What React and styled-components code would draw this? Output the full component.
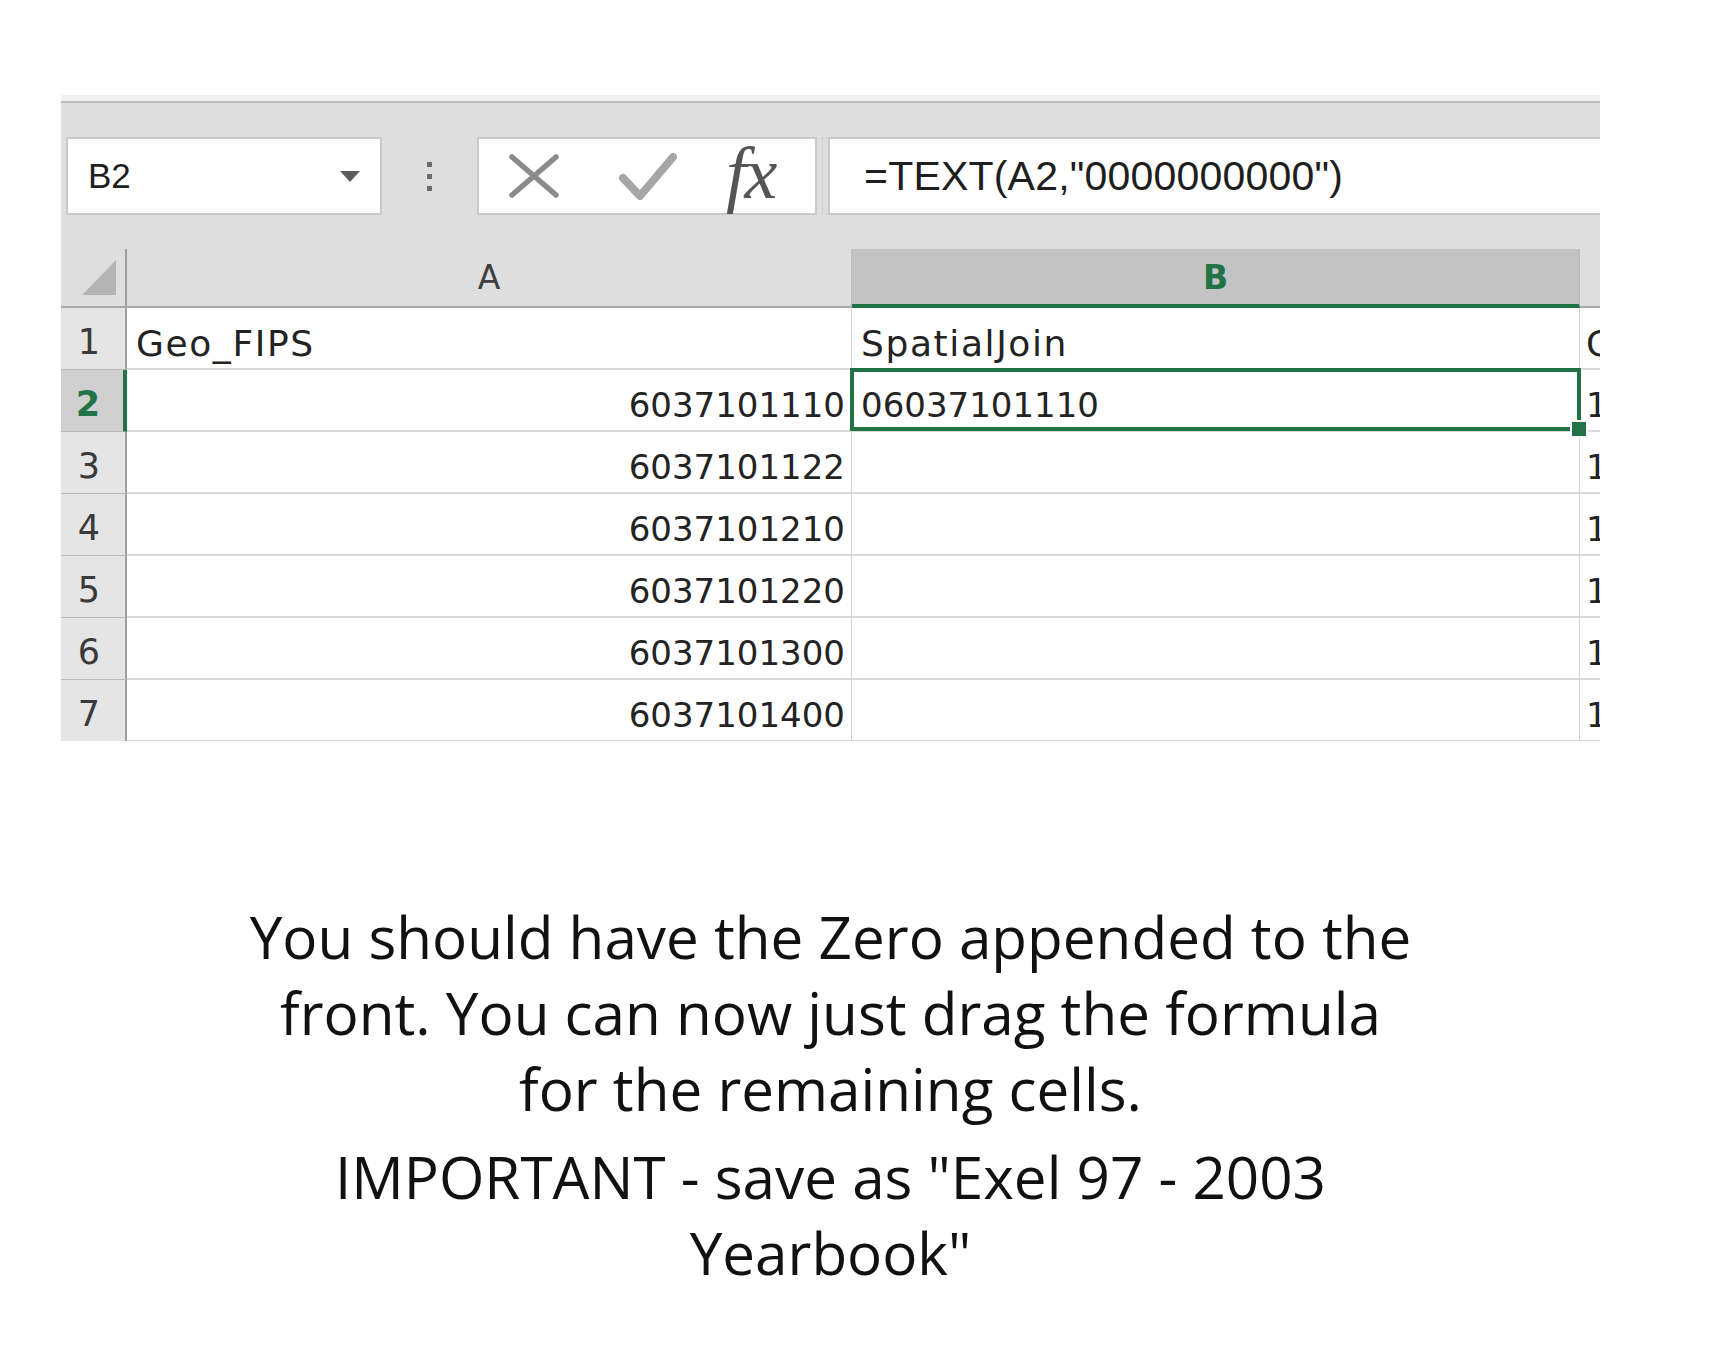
import styled, { createGlobalStyle } from 'styled-components';

const GlobalStyle = createGlobalStyle`
  html, body {
    margin: 0;
    padding: 0;
    background: #fff;
  }
  body {
    font-family: "Open Sans", "Liberation Sans", sans-serif;
  }
  * {
    box-sizing: border-box;
  }
`;

const Page = styled.div`
  width: 1736px;
  min-height: 1350px;
  padding: 95px 0 0 61px;
`;

const Sheet = styled.div`
  width: 1539px;
  height: 646px;
  overflow: hidden;
  background: #dedede;
  display: flex;
  flex-direction: column;
`;

const TopStrip = styled.div`
  flex: none;
  height: 8px;
  background: #f1f1f1;
  border-bottom: 2px solid #bcbcbc;
`;

const FormulaBar = styled.div`
  flex: none;
  height: 146px;
  padding: 34px 0 0 5px;
  display: flex;
  align-items: flex-start;
`;

const NameBox = styled.div`
  width: 316px;
  height: 78px;
  background: #fff;
  border: 2px solid #c9c9c9;
  padding: 0 20px;
  display: flex;
  align-items: center;
  justify-content: space-between;
  font-family: "Liberation Sans", Arial, sans-serif;
  font-size: 35px;
  color: #1e1e1e;
`;

const Grip = styled.div`
  width: 95px;
  height: 78px;
  display: flex;
  flex-direction: column;
  align-items: center;
  justify-content: center;
  gap: 7px;
`;

const GripDot = styled.span`
  width: 5px;
  height: 5px;
  background: #6c6c6c;
`;

const FxBox = styled.div`
  width: 340px;
  height: 78px;
  background: #fff;
  border: 2px solid #c9c9c9;
  padding-left: 29px;
  display: flex;
  align-items: center;
`;

const CancelIcon = styled.svg`
  width: 52px;
  height: 46px;
  margin-right: 58px;
`;

const EnterIcon = styled.svg`
  width: 59px;
  height: 50px;
  margin-right: 49px;
`;

const FxLabel = styled.span`
  font-family: "Liberation Serif", "Times New Roman", serif;
  font-style: italic;
  font-size: 74px;
  line-height: 1;
  color: #555;
  letter-spacing: -2px;
  margin-top: -6px;
`;

const BarDivider = styled.div`
  width: 11px;
  height: 78px;
  display: flex;
  justify-content: center;

  &::before {
    content: "";
    width: 1px;
    height: 100%;
    border-left: 1px dotted #bdbdbd;
  }
`;

const FormulaInput = styled.div`
  flex: 1;
  height: 78px;
  background: #fff;
  border: 2px solid #c9c9c9;
  border-right: none;
  padding-left: 34px;
  display: flex;
  align-items: center;
  font-family: "Liberation Sans", Arial, sans-serif;
  font-size: 41px;
  letter-spacing: 0.2px;
  color: #1e1e1e;
  white-space: nowrap;
`;

const Grid = styled.div`
  display: grid;
  grid-template-columns: 66px 725px 728px 60px;
  grid-template-rows: 59px;
  grid-auto-rows: 62px;
  font-family: "DejaVu Sans", Verdana, sans-serif;
`;

const Corner = styled.div`
  border-right: 2px solid #9f9f9f;
  border-bottom: 2px solid #a9a9a9;
  display: flex;
  align-items: center;
  justify-content: flex-end;
  padding-right: 9px;
`;

const ColHeader = styled.div`
  display: flex;
  align-items: center;
  justify-content: center;
  font-size: 33px;
  border-right: 1px solid #bdbdbd;
  border-bottom: ${(p) => (p.$active ? '4px solid #217346' : '2px solid #a9a9a9')};
  background: ${(p) => (p.$active ? '#c3c3c3' : 'transparent')};
  color: ${(p) => (p.$active ? '#217346' : '#3f3f3f')};
  font-weight: ${(p) => (p.$active ? 700 : 400)};
  padding-top: ${(p) => (p.$active ? '2px' : '0')};
`;

const RowHeader = styled.div`
  display: flex;
  align-items: center;
  justify-content: center;
  padding: 6px 8px 0 0;
  font-size: 35px;
  border-bottom: 1px solid #b7b7b7;
  border-right: ${(p) => (p.$active ? '4px solid #217346' : '2px solid #9f9f9f')};
  background: ${(p) => (p.$active ? '#cfcfcf' : '#e5e5e5')};
  color: ${(p) => (p.$active ? '#217346' : '#3a3a3a')};
  font-weight: ${(p) => (p.$active ? 700 : 400)};
`;

const Cell = styled.div`
  position: relative;
  display: flex;
  align-items: center;
  justify-content: ${(p) => (p.$align === 'right' ? 'flex-end' : 'flex-start')};
  padding: 10px 6px 0 ${(p) => (p.$edge ? '6px' : '9px')};
  background: #fff;
  border-bottom: 2px solid #d9d9d9;
  border-right: 1px solid #d2d2d2;
  font-size: ${(p) => (p.$text ? '36px' : '34px')};
  letter-spacing: ${(p) => (p.$text ? '1.6px' : '0')};
  color: #232323;
  white-space: nowrap;
  overflow: ${(p) => (p.$selected ? 'visible' : 'hidden')};
  z-index: ${(p) => (p.$selected ? 2 : 0)};

  ${(p) =>
    p.$selected &&
    `
    &::after {
      content: "";
      position: absolute;
      inset: -2px -2px -1px -2px;
      border: 4px solid #217346;
      pointer-events: none;
    }
    &::before {
      content: "";
      position: absolute;
      right: -9px;
      bottom: -8px;
      width: 14px;
      height: 14px;
      background: #217346;
      border: 2px solid #fff;
      z-index: 3;
    }
  `}
`;

const Caption = styled.div`
  width: 1539px;
  margin-top: 158px;
  text-align: center;
  font-family: "Open Sans", sans-serif;
  font-size: 58.4px;
  line-height: 76px;
  color: #111;
`;

const Para = styled.p`
  margin: 0 0 12px;
`;

const rows = [
  { n: 1, a: 'Geo_FIPS', b: 'SpatialJoin', c: 'County' },
  { n: 2, a: '6037101110', b: '06037101110', c: '1', active: true },
  { n: 3, a: '6037101122', b: '', c: '1' },
  { n: 4, a: '6037101210', b: '', c: '1' },
  { n: 5, a: '6037101220', b: '', c: '1' },
  { n: 6, a: '6037101300', b: '', c: '1' },
  { n: 7, a: '6037101400', b: '', c: '1' },
];

export default function App() {
  return (
    <>
      <GlobalStyle />
      <Page>
        <Sheet>
          <TopStrip />
          <FormulaBar>
            <NameBox>
              <span>B2</span>
              <svg width="20" height="11" viewBox="0 0 20 11">
                <polygon points="0,0 20,0 10,11" fill="#5c5c5c" />
              </svg>
            </NameBox>
            <Grip>
              <GripDot />
              <GripDot />
              <GripDot />
            </Grip>
            <FxBox>
              <CancelIcon viewBox="0 0 52 46">
                <path d="M4 4 L48 42 M48 4 L4 42" stroke="#8b8b8b" strokeWidth="5.5" strokeLinecap="round" fill="none" />
              </CancelIcon>
              <EnterIcon viewBox="0 0 59 50">
                <path d="M5 27 L22 45 L55 6" stroke="#a6a6a6" strokeWidth="8" strokeLinecap="round" strokeLinejoin="round" fill="none" />
              </EnterIcon>
              <FxLabel>fx</FxLabel>
            </FxBox>
            <BarDivider />
            <FormulaInput>=TEXT(A2,"0000000000")</FormulaInput>
          </FormulaBar>

          <Grid>
            <Corner>
              <svg width="34" height="35" viewBox="0 0 34 35">
                <polygon points="34,0 34,35 0,35" fill="#b4b4b4" />
              </svg>
            </Corner>
            <ColHeader>A</ColHeader>
            <ColHeader $active>B</ColHeader>
            <ColHeader />

            {rows.map((r) => (
              <RowGroup key={r.n} row={r} />
            ))}
          </Grid>
        </Sheet>

        <Caption>
          <Para>
            You should have the Zero appended to the
            <br />
            front. You can now just drag the formula
            <br />
            for the remaining cells.
          </Para>
          <Para>
            IMPORTANT - save as "Exel 97 - 2003
            <br />
            Yearbook"
          </Para>
        </Caption>
      </Page>
    </>
  );
}

function RowGroup({ row }) {
  const isText = row.n === 1;
  return (
    <>
      <RowHeader $active={row.active}>{row.n}</RowHeader>
      <Cell $align={isText ? 'left' : 'right'} $text={isText}>
        {row.a}
      </Cell>
      <Cell $text={isText} $selected={row.active}>
        {row.b}
      </Cell>
      <Cell $edge $text={isText}>
        {row.c}
      </Cell>
    </>
  );
}
